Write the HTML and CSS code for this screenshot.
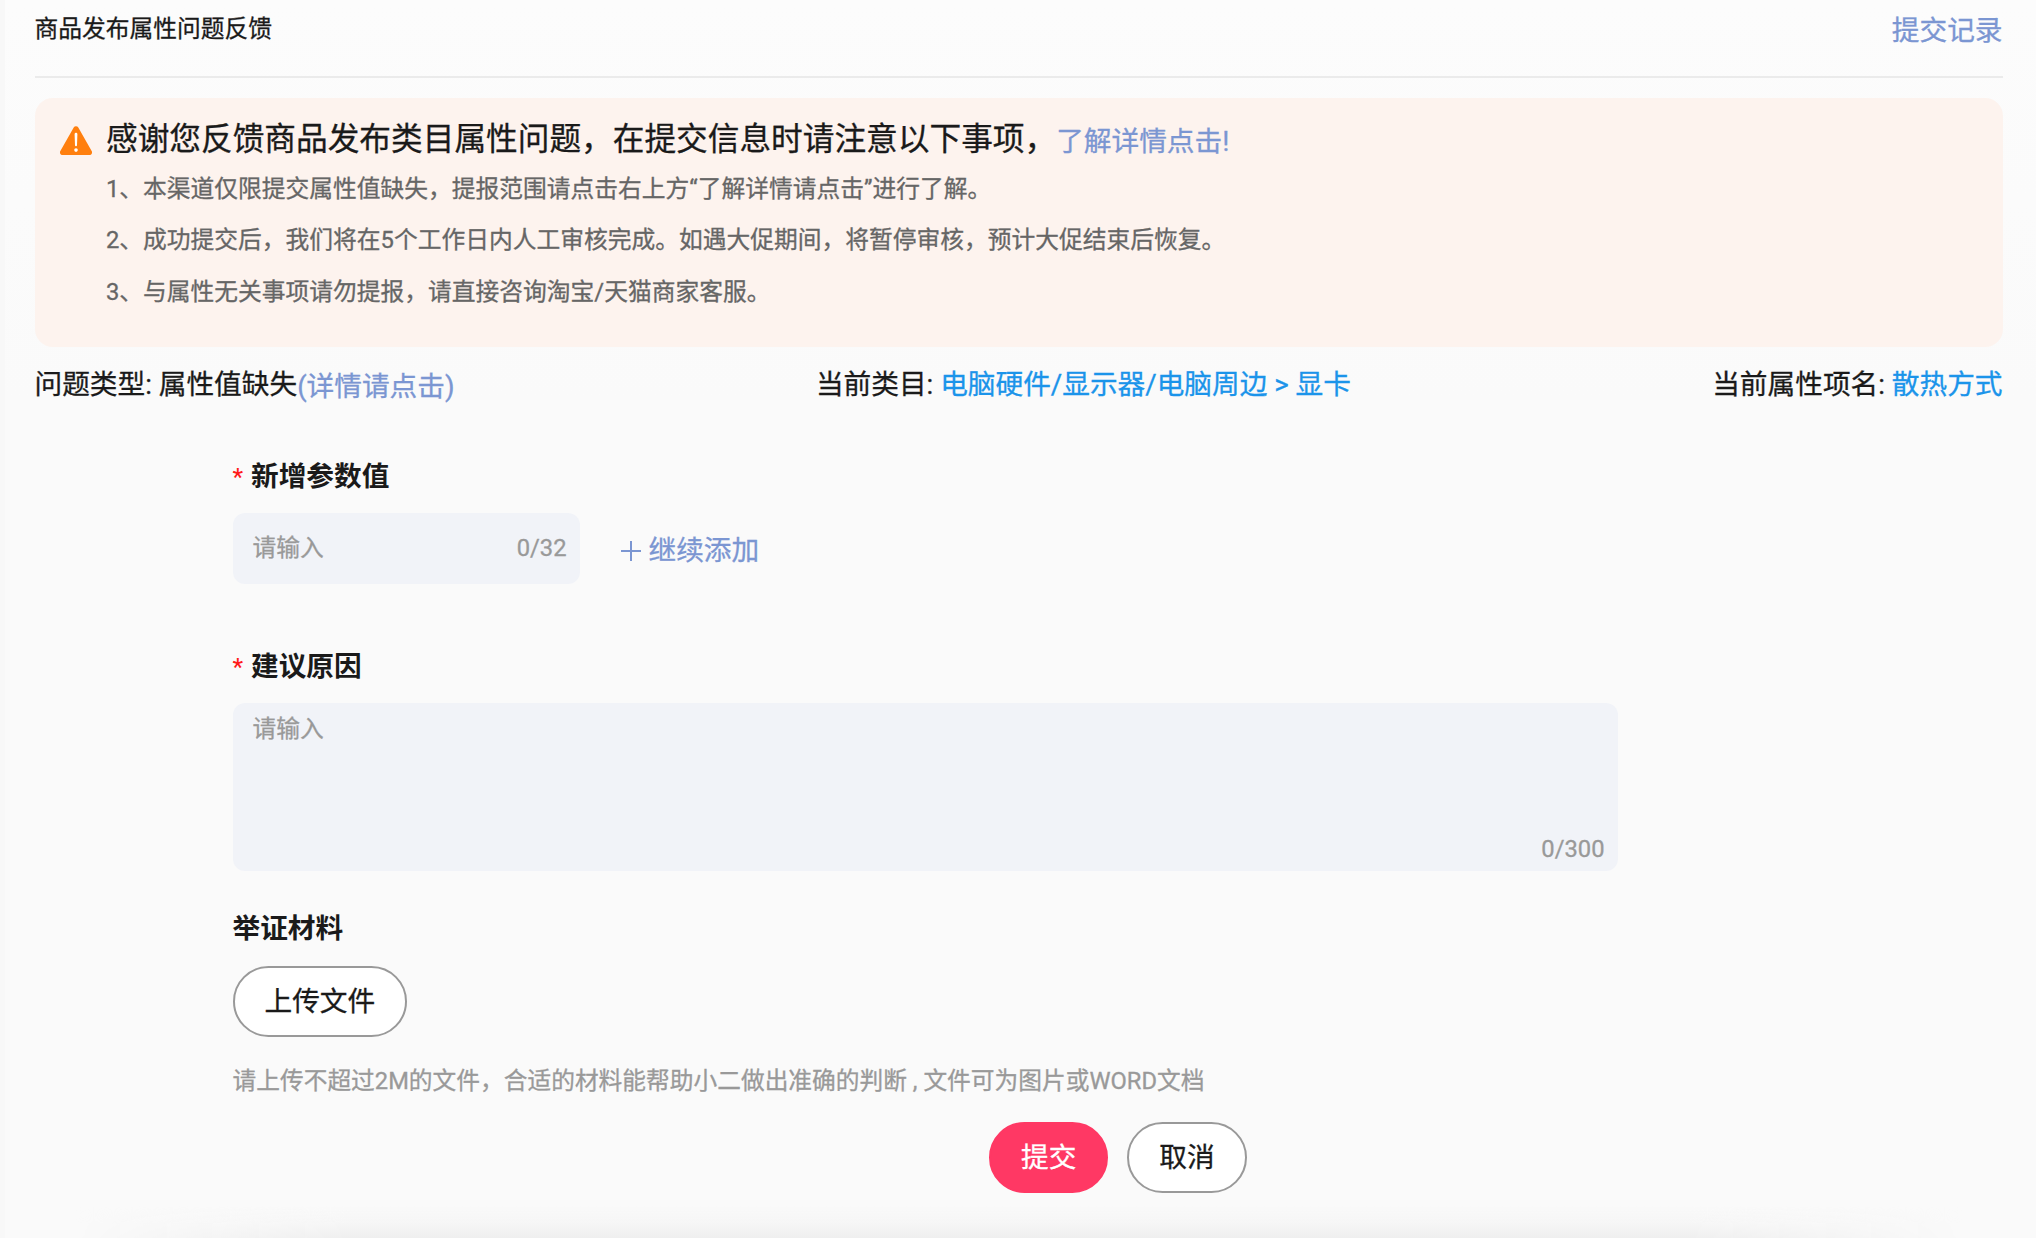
FILE: index.html
```html
<!DOCTYPE html>
<html lang="zh-CN">
<head>
<meta charset="utf-8">
<title>商品发布属性问题反馈</title>
<link rel="stylesheet" href="styles.css">
</head>
<body>
<main class="dialog">
  <header class="header">
    <h1 class="title">商品发布属性问题反馈</h1>
    <a class="link header-link">提交记录</a>
  </header>

  <section class="notice">
    <svg class="notice-icon" viewBox="0 0 32 29" aria-hidden="true">
      <path d="M13.700 1.500a2.700 2.700 0 0 1 4.600 0L31.500 24.800a2.600 2.600 0 0 1-2.300 4.200H2.800a2.600 2.600 0 0 1-2.300-4.200Z" fill="#ff7f0e"/>
      <path d="M14.600 8.200a1.400 1.400 0 0 1 2.800 0l-.4 11a1 1 0 0 1-2 0Z" fill="#fff"/>
      <circle cx="16" cy="24.100" r="1.800" fill="#fff"/>
    </svg>
    <div class="notice-body">
      <div class="notice-head">
        <h2 class="notice-title">感谢您反馈商品发布类目属性问题，在提交信息时请注意以下事项，</h2>
        <a class="link notice-link">了解详情点击!</a>
      </div>
      <p class="notice-line">1、本渠道仅限提交属性值缺失，提报范围请点击右上方“了解详情请点击”进行了解。</p>
      <p class="notice-line">2、成功提交后，我们将在5个工作日内人工审核完成。如遇大促期间，将暂停审核，预计大促结束后恢复。</p>
      <p class="notice-line">3、与属性无关事项请勿提报，请直接咨询淘宝/天猫商家客服。</p>
    </div>
  </section>

  <section class="summary">
    <div class="summary-item">问题类型: 属性值缺失<a class="link summary-link">(详情请点击)</a></div>
    <div class="summary-item">当前类目: <span class="value">电脑硬件/显示器/电脑周边 &gt; 显卡</span></div>
    <div class="summary-item">当前属性项名: <span class="value">散热方式</span></div>
  </section>

  <form class="form">
    <div class="label"><span class="required">*</span>新增参数值</div>
    <div class="value-row">
      <div class="input"><span>请输入</span><span>0/32</span></div>
      <a class="link add">
        <svg class="plus" viewBox="0 0 20 20" aria-hidden="true"><path d="M10 0v20M0 10h20" stroke="currentColor" stroke-width="2"/></svg>
        <span>继续添加</span>
      </a>
    </div>

    <div class="label"><span class="required">*</span>建议原因</div>
    <div class="textarea"><span>请输入</span><span class="count">0/300</span></div>

    <div class="label">举证材料</div>
    <button type="button" class="button">上传文件</button>
    <p class="hint">请上传不超过2M的文件，合适的材料能帮助小二做出准确的判断 , 文件可为图片或WORD文档</p>
  </form>

  <footer class="actions">
    <button type="button" class="button primary">提交</button>
    <button type="button" class="button">取消</button>
  </footer>
  <div class="bottom-shade"></div>
</main>
</body>
</html>
```
FILE: styles.css
```css
* {
  box-sizing: border-box;
  margin: 0;
}

body {
  font-family: Roboto, "Noto Sans CJK SC", sans-serif;
  font-size: 27.68px;
  line-height: 40px;
  color: #1a1a1a;
  background: #fafafa;
  -webkit-text-stroke: 0.3px;
}

.dialog {
  display: flex;
  flex-direction: column;
  height: 1238px;
  padding: 0 33.5px 0 30px;
  border-left: 5px solid #f8f8f8;
  overflow: hidden;
  background: linear-gradient(#fcfcfc, #fafafa 400px);
}

.link {
  color: #7b96d2;
}

.value {
  color: #1b94ea;
}

.header {
  display: flex;
  justify-content: space-between;
  height: 78px;
  padding-top: 9px;
  border-bottom: 2px solid #ebebeb;
}

.header-link {
  padding-top: 2px;
}

.title {
  margin-left: -0.5px;
  font-size: 23.76px;
  font-weight: 400;
}

.notice {
  display: flex;
  gap: 14px;
  height: 249px;
  margin-top: 20px;
  padding: 20px 25px;
  border-radius: 18px;
  background: #fdf3ee;
}

.notice-icon {
  width: 32px;
  height: 29px;
  margin-top: 8px;
}

.notice-head {
  display: flex;
  height: 46px;
}

.notice-title {
  font-size: 31.68px;
  font-weight: 400;
  line-height: 44px;
}

.notice-link {
  line-height: 48px;
}

.notice-line {
  font-size: 23.76px;
  line-height: 51.3px;
  color: #666;
}

.summary {
  display: flex;
  justify-content: space-between;
  height: 40px;
  margin: 18px 0 0 -0.5px;
}

.summary-link {
  display: inline-block;
  padding-top: 2px;
  vertical-align: top;
}

.form {
  width: 1416px;
  padding: 52px 0 0 197.5px;
}

.label {
  display: flex;
  height: 40px;
  font-weight: 600;
  -webkit-text-stroke: 0;
}

.required {
  width: 18.5px;
  font-size: 23.76px;
  font-weight: 500;
  color: #ff1a1a;
}

.value-row {
  display: flex;
  gap: 41px;
  height: 71px;
  margin: 16px 0 63px;
}

.input,
.textarea {
  display: flex;
  justify-content: space-between;
  border-radius: 12px;
  background: #f1f3f8;
  font-size: 23.76px;
  color: #999;
}

.input {
  width: 347px;
  padding: 0 13px 0 20px;
  line-height: 71px;
}

.add {
  display: flex;
  align-items: center;
  gap: 8px;
  padding-top: 4px;
}

.plus {
  width: 20px;
  height: 20px;
}

.textarea {
  width: 1385.5px;
  height: 168px;
  margin: 16px 0 38px;
  padding: 6px 13.5px 2px 20px;
}

.count {
  align-self: flex-end;
}

.button {
  height: 71px;
  padding: 0 30px;
  border: 2px solid #999;
  border-radius: 36px;
  background: #fff;
  color: #1a1a1a;
  font: inherit;
  -webkit-text-stroke: inherit;
}

.form .button {
  display: block;
  margin-top: 17px;
}

.hint {
  margin-top: 24px;
  font-size: 23.72px;
  color: #999;
  white-space: nowrap;
}

.actions {
  display: flex;
  gap: 19px;
  margin-top: 21px;
  padding-left: 954px;
}

.primary {
  border-color: #ff3864;
  background: #ff3864;
  color: #fff;
}

/* Soft shadow along the lower edge, fading towards both corners */
.bottom-shade {
  height: 32px;
  margin-top: auto;
  background: linear-gradient(#f0f0f000, #f6f6f6 55%, #efefef);
  -webkit-mask-image: linear-gradient(90deg, transparent 2%, #000 16%, #000 84%, transparent 98%);
  mask-image: linear-gradient(90deg, transparent 2%, #000 16%, #000 84%, transparent 98%);
}
```
